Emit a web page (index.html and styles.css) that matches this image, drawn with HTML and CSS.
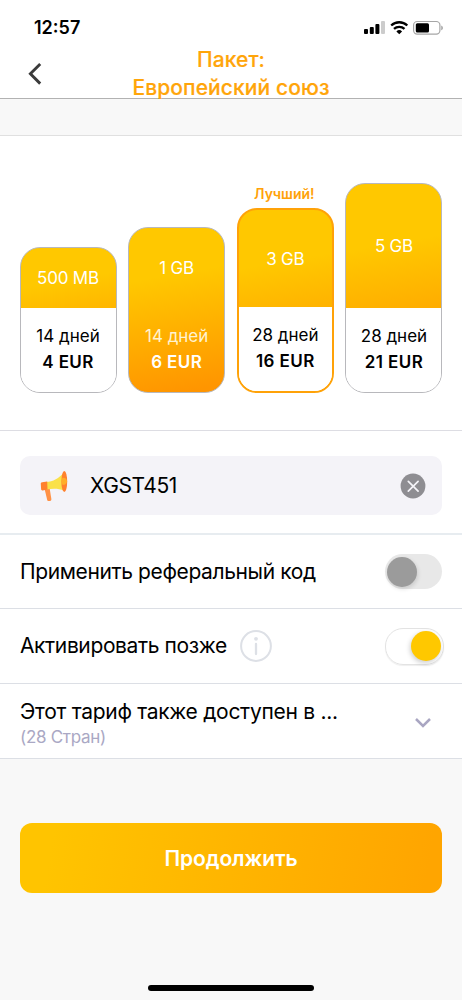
FILE: index.html
```
<!DOCTYPE html>
<html lang="ru">
<head>
<meta charset="utf-8">
<meta name="viewport" content="width=device-width">
<title>Пакет: Европейский союз</title>
<link rel="stylesheet" href="styles.css">
</head>
<body>
<div class="screen">
  <div class="statusbar">
    <span class="clock">12:57</span>
    <svg class="status-icons" width="80" height="16" viewBox="0 0 80 16">
      <rect x="0" y="9" width="4" height="5" rx="1"/>
      <rect x="5.8" y="7" width="4" height="7" rx="1"/>
      <rect x="11.4" y="4" width="4" height="10" rx="1"/>
      <rect x="17" y="1" width="4" height="13" rx="1" fill="#ccc"/>
      <g fill="none" stroke="#000" stroke-width="2.3">
        <path d="M27.2 5.5a11.6 11.6 0 0 1 16.1 0"/>
        <path d="M30 8.9a7.6 7.6 0 0 1 10.5 0"/>
      </g>
      <path d="M32.4 11.4a4.2 4.2 0 0 1 5.7 0L35.25 14.2z"/>
      <rect x="49.6" y="1.5" width="26.3" height="12.6" rx="3.6" fill="none" stroke="#a6a6a6" stroke-width="1.2"/>
      <rect x="51.8" y="3.2" width="13.2" height="9.2" rx="1.5"/>
      <path d="M77.3 5.4c2 .8 2 4 0 4.8z" fill="#999"/>
    </svg>
  </div>
  <header class="navbar">
    <svg class="back" width="16" height="24" viewBox="0 0 16 24"><path d="M14.2 2 4.400 11.800l9.800 9.800" fill="none" stroke="#3b3b3b" stroke-width="2.900"/></svg>
    <h1 class="title">Пакет:<br>Европейский союз</h1>
  </header>
  <div class="spacer"></div>
  <section class="plans">
    <div class="plan plan-500"><div class="size">500 MB</div><div class="info"><span class="days">14 дней</span><b class="price">4 EUR</b></div></div>
    <div class="plan plan-1 selected"><div class="size">1 GB</div><div class="info"><span class="days">14 дней</span><b class="price">6 EUR</b></div></div>
    <div class="best"><span class="best-label">Лучший!</span>
      <div class="plan plan-3"><div class="size">3 GB</div><div class="info"><span class="days">28 дней</span><b class="price">16 EUR</b></div></div>
    </div>
    <div class="plan plan-5"><div class="size">5 GB</div><div class="info"><span class="days">28 дней</span><b class="price">21 EUR</b></div></div>
  </section>
  <section class="promo">
    <div class="field">
      <svg class="horn" width="28" height="32" viewBox="0 0 28 32">
        <path d="M4.500 18.500 9.600 18l1.800 11.200c.2 2-3.600 2.700-4.200.7z" fill="#ff9145"/>
        <path d="M6 12 C13 12 19 8 24 2.500V20.500C18 18 12 18.500 6 19.500z" fill="#fae149"/>
        <path d="M7.200 11.400 2.200 12.200C.8 12.500.7 13 .8 14l.3 5c.1 1.200.5 1.500 1.700 1.400L7.500 19.600z" fill="#ff812e"/>
        <ellipse cx="24.300" cy="11.500" rx="2.900" ry="10.600" fill="#ff812e"/>
        <path d="M22.500 7.800c6-.5 6 7 .2 7.200-1.500-2-1.500-5-.2-7.200z" fill="#ffad28"/>
      </svg>
      <span class="code">XGST451</span>
      <svg class="clear" width="26" height="26" viewBox="0 0 26 26"><circle cx="13" cy="13" r="12.400" fill="#8e8d92"/><path d="m8.300 8.300 9.800 9.800m0-9.800-9.800 9.800" fill="none" stroke="#f4f3f8" stroke-width="1.700" stroke-linecap="round"/></svg>
    </div>
  </section>
  <section class="row referral">
    <span class="label">Применить реферальный код</span>
    <span class="toggle off"><i class="knob"></i></span>
  </section>
  <section class="row later">
    <span class="label">Активировать позже</span>
    <svg class="info-icon" width="32" height="32" viewBox="0 0 32 32"><circle cx="16" cy="16" r="14.900" fill="none" stroke="#dde0e6" stroke-width="2"/><circle cx="16" cy="8.800" r="1.900" fill="#dde0e6"/><path d="M16 14v10" stroke="#dde0e6" stroke-width="2.300" stroke-linecap="round"/></svg>
    <span class="toggle on"><i class="knob"></i></span>
  </section>
  <section class="row countries">
    <div class="stack"><span class="label tariff">Этот тариф также доступен в ...</span><span class="count">(28 Стран)</span></div>
    <svg class="chevron" width="18" height="12" viewBox="0 0 18 12"><path d="m2 2 7 7 7-7" fill="none" stroke="#a9a6c2" stroke-width="2.500"/></svg>
  </section>
  <footer class="footer">
    <button class="continue">Продолжить</button>
    <div class="home"></div>
  </footer>
</div>
</body>
</html>
```
FILE: styles.css
```
* { box-sizing: border-box; }
body { margin: 0; font-family: Inter, "Liberation Sans", sans-serif; color: #000; background: #f8f8f8; }
svg { display: block; flex: none; }
.screen { width: 462px; height: 1000px; display: flex; flex-direction: column; overflow: hidden; }
.screen > * { flex: none; }
.statusbar { height: 48px; padding: 20px 18px 0 34px; display: flex; justify-content: space-between; background: #fff; }
.clock { font-size: 18px; line-height: 16px; font-weight: 600; }
.navbar { height: 51px; background: #fff; border-bottom: 1px solid #b2b2b2; display: grid; grid-template-columns: 60px 1fr 60px; }
.back { margin: 14px 0 0 26px; }
.title { margin: -2px 0 0; font-size: 21px; line-height: 28px; font-weight: 500; letter-spacing: 0.1px; color: #ffa50a; -webkit-text-stroke: 0.2px #ffa50a; text-align: center; white-space: nowrap; }
.spacer { height: 37px; border-bottom: 1px solid #e0e0e0; background: #f8f8f8; }
.plans { height: 295px; padding: 0 19.5px 37px; border-bottom: 1px solid #dddde3; background: #fff; display: flex; align-items: flex-end; justify-content: space-between; }
.plan { width: 97px; border: 1px solid #b8b8bc; border-radius: 20px; overflow: hidden; display: flex; flex-direction: column; background: linear-gradient(170deg, #ffc800 30%, #ff9500 96%); }
.plan-500 { height: 146px; background: linear-gradient(170deg, #ffc800 25%, #ffb400 50%, #fff 50%); }
.plan-1 { height: 166px; }
.plan-3 { height: 185px; border: 2px solid #ffa208; background: linear-gradient(170deg, #ffc800 30%, #ffb000 60%, #fff 68%); }
.plan-5 { height: 210px; background: linear-gradient(170deg, #ffc800 30%, #ffab00 64%, #fff 68%); }
.size { flex: 1; display: flex; align-items: center; justify-content: center; color: #fff; font-size: 17px; letter-spacing: -0.2px; }
.info { height: 84px; padding-top: 15px; background: #fff; display: flex; flex-direction: column; align-items: center; line-height: 26px; font-size: 17px; }
.selected .info { background: none; color: #fff; }
.selected .days { color: #fff3d0; }
.price { font-weight: 600; letter-spacing: 0.4px; }
.best { display: flex; flex-direction: column; align-items: center; }
.best-label { color: #ffa20a; font-size: 14px; line-height: 18px; font-weight: 600; margin: 0 2px 5px 0; }
.promo { height: 104px; padding: 25px 20px 0; background: #fff; border-bottom: 2px solid #e7ecf0; }
.field { height: 59px; border-radius: 10px; background: #f4f3f8; padding: 0 16px 0 20px; display: flex; align-items: center; }
.code { font-size: 21px; letter-spacing: -0.4px; margin-left: 22px; flex: 1; }
.row { height: 75px; padding: 0 20px; display: flex; align-items: center; background: #fff; border-bottom: 1px solid #dcdfe5; }
.referral { height: 74px; }
.label { font-size: 21px; line-height: 26px; white-space: nowrap; letter-spacing: -0.38px; }
.info-icon { margin-left: 13px; }
.toggle { margin-left: auto; width: 57px; height: 35px; border-radius: 18px; display: flex; align-items: center; padding: 2px; }
.knob { width: 30px; height: 30px; border-radius: 50%; }
.off { background: #e8e8e8; }
.off .knob { background: #9b9b9b; box-shadow: 1px 2px 4px #0002; }
.on { width: 59px; height: 37px; border: 1px solid #e3e3e3; margin-right: -2px; justify-content: flex-end; box-shadow: 0 1px 1px #0001; }
.on .knob { background: #ffc800; box-shadow: -1px 2px 5px #0003; }
.stack { flex: 1; display: flex; flex-direction: column; padding-top: 5px; }
.tariff { letter-spacing: -0.28px; }
.count { color: #aaa8c4; font-size: 17px; line-height: 24px; letter-spacing: -0.3px; }
.chevron { margin: 4px 10px 0 0; }
.footer { flex: 1 !important; padding: 64px 20px 9px; background: #f8f8f8; display: flex; flex-direction: column; align-items: center; justify-content: space-between; }
.continue { width: 422px; height: 70px; border: 0; padding: 0; border-radius: 12px; background: linear-gradient(100deg, #ffc400 8%, #ffa500 96%); color: #fff; font: 600 21px Inter, "Liberation Sans", sans-serif; letter-spacing: -0.1px; }
.home { width: 166px; height: 6px; border-radius: 3px; background: #000; }
```
